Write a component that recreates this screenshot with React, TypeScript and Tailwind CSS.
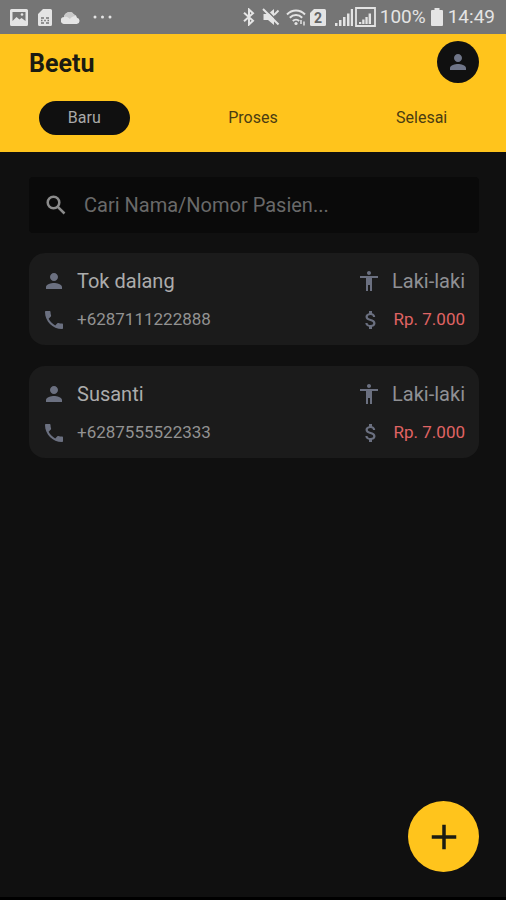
import React, { useState } from "react";
import {
  MdPerson,
  MdPhone,
  MdAccessibility,
  MdAttachMoney,
  MdAdd,
} from "react-icons/md";

const tabs = ["Baru", "Proses", "Selesai"];

const patients = [
  { name: "Tok dalang", phone: "+6287111222888", gender: "Laki-laki", price: "Rp. 7.000" },
  { name: "Susanti", phone: "+6287555522333", gender: "Laki-laki", price: "Rp. 7.000" },
];

function StatusBar() {
  return (
    <div className="flex h-[34px] items-center justify-between bg-[#757575] pl-[10px] pr-[11px] text-[#e4e4e4]">
      <div className="flex items-center">
        {/* picture */}
        <svg className="mr-[10px]" width="18" height="17" viewBox="0 0 18 17">
          <path fill="currentColor" fillRule="evenodd" d="M1.500 0h15A1.500 1.500 0 0 1 18 1.500v14a1.500 1.500 0 0 1-1.500 1.500h-15A1.500 1.500 0 0 1 0 15.500v-14A1.500 1.500 0 0 1 1.500 0zM2.500 3v9l4-4 3 2.500 2-1.500 4 3V3z" />
          <circle cx="12" cy="5.500" r="1.300" fill="currentColor" />
        </svg>
        {/* sim card */}
        <svg className="mr-[9px]" width="14" height="17" viewBox="0 0 14 17">
          <path fill="currentColor" d="M5 0h7.500A1.500 1.500 0 0 1 14 1.500v14a1.500 1.500 0 0 1-1.500 1.500h-11A1.500 1.500 0 0 1 0 15.500V5z" />
          <path stroke="#757575" strokeWidth="1.500" fill="none" d="M3 9h3M8 9h3M3 11.500h1.500M6.200 11.500h1.600M9.500 11.500H11M3 14h3M8 14h3" />
        </svg>
        {/* cloud */}
        <svg className="mr-[13px]" width="19" height="13" viewBox="0 0 19 13">
          <path fill="currentColor" d="M3.500 13a3.500 3.500 0 0 1-.5-7A5.500 5.500 0 0 1 13 3.500a4 4 0 0 1 3 3.200A3.200 3.200 0 0 1 15.800 13z" />
          <path fill="#c9c9c9" d="M3 6A5.500 5.500 0 0 1 13 3.500a4 4 0 0 1 2 1.600C12 5 10 6.500 9 8 7 6 5 5.600 3 6z" />
        </svg>
        <svg width="19" height="4" viewBox="0 0 19 4" fill="currentColor">
          <circle cx="2" cy="2" r="1.500" />
          <circle cx="9.500" cy="2" r="1.500" />
          <circle cx="17" cy="2" r="1.500" />
        </svg>
      </div>
      <div className="flex items-center">
        {/* bluetooth */}
        <svg width="14" height="18" viewBox="0 0 14 18" fill="none" stroke="currentColor" strokeWidth="2">
          <path d="M2 4.800l9 8L7 16.500v-15l4 3.700-9 8" />
        </svg>
        {/* sound off */}
        <svg className="ml-[6px]" width="18" height="18" viewBox="0 0 18 18">
          <path fill="currentColor" d="M1.500 6H6l6-5v16l-6-5H1.500z" />
          <path stroke="#757575" strokeWidth="1.500" d="M2.500 0L18 15.500" />
          <path stroke="currentColor" strokeWidth="2" d="M1 1l15.500 15.500" />
          <path stroke="currentColor" strokeWidth="1.800" d="M12 7l4.500-4.500" />
        </svg>
        <svg className="ml-[6px]" width="20" height="17" viewBox="0 0 20 17" fill="none" stroke="currentColor" strokeWidth="2">
          <path d="M1 5.500C6 .2 14 .2 19 5.500M3.800 8.800c3.500-3.600 8.900-3.600 12.400 0M6.800 12c1.800-1.800 4.600-1.800 6.400 0" />
          <circle cx="10" cy="14.500" r="1.600" fill="currentColor" stroke="none" />
          <path d="M15 11v4M18 12.500v4" strokeWidth="1.500" />
        </svg>
        {/* active sim */}
        <svg className="ml-[4px]" width="16" height="17" viewBox="0 0 16 17">
          <path fill="currentColor" d="M4 0h10.500A1.500 1.500 0 0 1 16 1.500v14a1.500 1.500 0 0 1-1.500 1.500h-13A1.500 1.500 0 0 1 0 15.500V4z" />
          <text x="8" y="13.500" textAnchor="middle" fontSize="14" fontWeight="700" fill="#656565">2</text>
        </svg>
        <svg className="ml-[9px]" width="18" height="17" viewBox="0 0 18 17" fill="currentColor">
          <path d="M0 14h2.500v3H0zM4 11h2.500v6H4zM8 8h2.500v9H8zM12 4.500h2.500V17H12zM15.800 0H18v17h-2.200z" />
        </svg>
        <svg className="ml-[2px]" width="21" height="20" viewBox="0 0 21 20" fill="currentColor">
          <path d="M1 1h19v18H1z" fill="none" stroke="currentColor" strokeWidth="1.800" />
          <path d="M4 15h2.300v2H4zM7.200 12.500h2.300V17H7.200zM10.400 10h2.300v7h-2.300zM13.600 6.500H16V17h-2.400z" />
        </svg>
        <span className="ml-[4px] text-[19px]">100%</span>
        <svg className="mx-[5px]" width="12" height="18" viewBox="0 0 12 18" fill="currentColor">
          <path d="M3.500 0h5v2H11a1 1 0 0 1 1 1v14a1 1 0 0 1-1 1H1a1 1 0 0 1-1-1V3a1 1 0 0 1 1-1h2.500z" />
        </svg>
        <span className="text-[19px]">14:49</span>
      </div>
    </div>
  );
}

export default function App() {
  const [active, setActive] = useState("Baru");
  const [keyword, setKeyword] = useState("");

  const shown = patients.filter((p) =>
    (p.name + p.phone).toLowerCase().includes(keyword.toLowerCase())
  );

  return (
    <div className="min-h-screen bg-[#101010] font-[Roboto,sans-serif]">
      <StatusBar />

      {/* Header */}
      <header className="bg-[#ffc41c] pb-[17px] pt-[7px]">
        <div className="flex items-center justify-between pl-[29px] pr-[27px]">
          <h1 className="pt-1 text-[25px] leading-8 font-bold text-[#1b1b12]">Beetu</h1>
          <button aria-label="Profil" className="flex h-[42px] w-[42px] items-center justify-center rounded-full bg-[#101010] text-[#6f7588]">
            <MdPerson size={24} />
          </button>
        </div>
        <nav className="mt-[18px] grid grid-cols-3 justify-items-center">
          {tabs.map((t) => (
            <button
              key={t}
              onClick={() => setActive(t)}
              className={
                "h-[34px] rounded-full px-[29px] text-base " +
                (active === t ? "bg-[#101010] text-[#a9a9a9]" : "text-[#4a3c12]")
              }
            >
              {t}
            </button>
          ))}
        </nav>
      </header>

      <main className="pl-[29px] pr-[27px] pt-[25px]">
        {/* Search */}
        <label className="flex h-14 items-center gap-[15px] rounded bg-[#0a0a0a] px-[14px] text-[#8b8b8b]">
          <svg width="26" height="26" viewBox="0 0 26 26" fill="none" stroke="currentColor" strokeWidth="2.500">
            <circle cx="10.500" cy="10.500" r="5.800" />
            <path d="M14.800 14.800l6.700 6.700" />
          </svg>
          <input
            aria-label="Cari Nama/Nomor Pasien"
            value={keyword}
            onChange={(e) => setKeyword(e.target.value)}
            placeholder="Cari Nama/Nomor Pasien..."
            className="min-w-0 flex-1 bg-transparent text-xl outline-none placeholder:text-[#696969]"
          />
        </label>

        {/* Patient list */}
        <ul className="mt-5 flex flex-col gap-[21px]">
          {shown.map((p) => (
            <li key={p.phone} className="flex flex-col gap-[13px] rounded-2xl bg-[#1b1b1b] pl-[13px] pr-[14px] pb-[13px] pt-[14px] text-[#6b7080]">
              <div className="flex h-7 items-center justify-between">
                <div className="flex items-center gap-[11px]">
                  <MdPerson size={24} />
                  <span className="text-xl text-[#acacac]">{p.name}</span>
                </div>
                <div className="flex items-center gap-[11px]">
                  <MdAccessibility size={24} />
                  <span className="text-xl text-[#8f9094]">{p.gender}</span>
                </div>
              </div>
              <div className="flex h-6 items-center justify-between">
                <div className="flex items-center gap-[11px]">
                  <MdPhone size={24} />
                  <span className="text-[17px] text-[#929292]">{p.phone}</span>
                </div>
                <div className="flex items-center gap-[11px]">
                  <MdAttachMoney size={24} />
                  <span className="text-[17px] text-[#e06464]">{p.price}</span>
                </div>
              </div>
            </li>
          ))}
        </ul>
      </main>

      <button aria-label="Tambah" className="fixed bottom-7 right-[27px] flex h-[71px] w-[71px] items-center justify-center rounded-full bg-[#ffc41c] text-[#1b1b12]">
        <MdAdd size={42} />
      </button>
      <div className="fixed inset-x-0 bottom-0 h-[3px] bg-black" />
    </div>
  );
}
